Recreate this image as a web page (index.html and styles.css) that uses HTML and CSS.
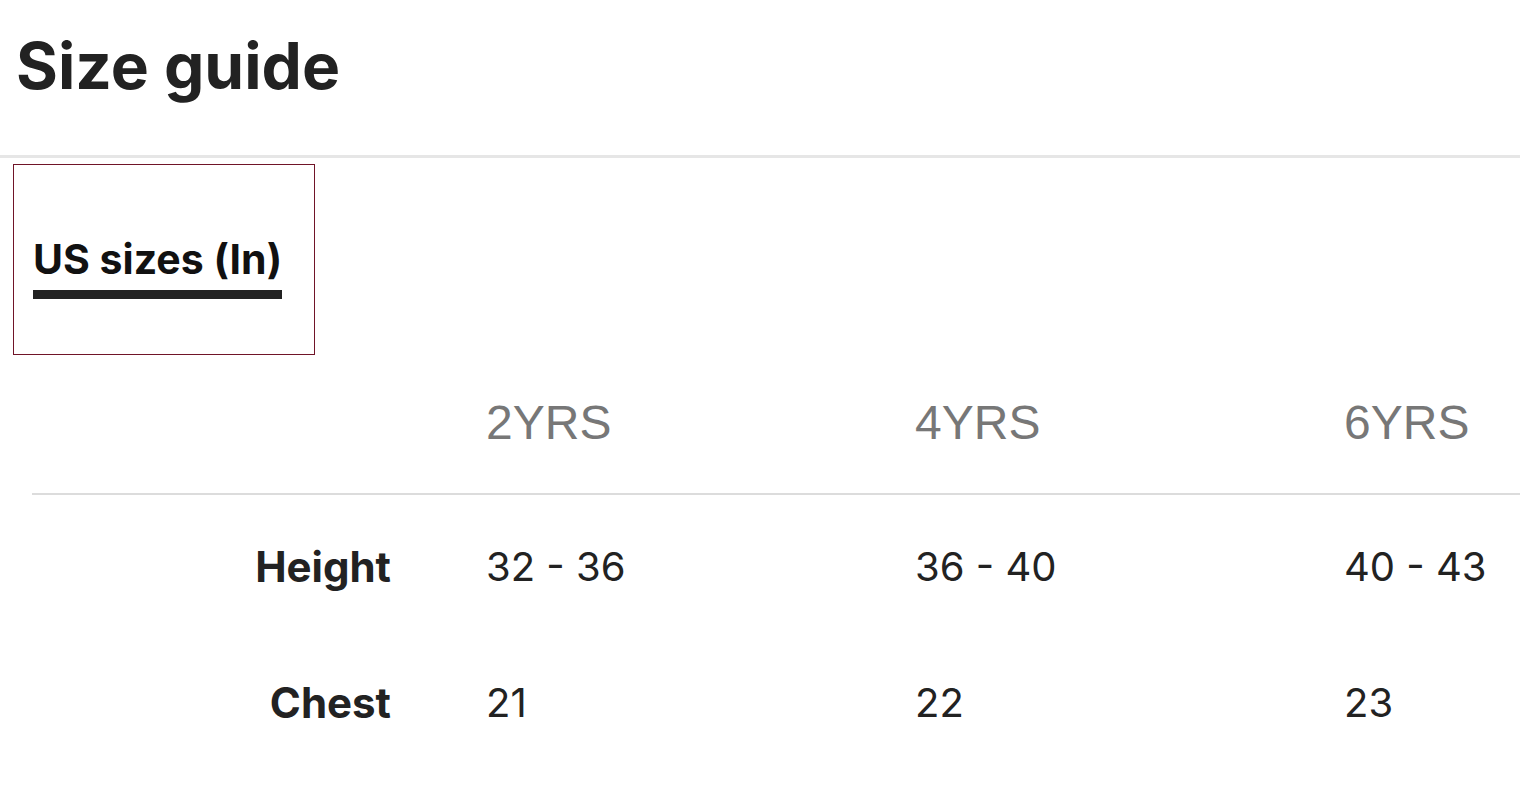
FILE: index.html
```html
<!DOCTYPE html>
<html>
<head>
<meta charset="utf-8">
<link rel="stylesheet" href="styles.css">
</head>
<body>
<div class="page">
  <header class="header">
    <h1 class="title">Size guide</h1>
  </header>
  <div class="tabs">
    <div class="tab"><span class="tab-label">US sizes (In)</span></div>
  </div>
  <div class="table">
    <div class="row head">
      <div class="cell label"></div>
      <div class="cell size">2YRS</div>
      <div class="cell size">4YRS</div>
      <div class="cell size">6YRS</div>
    </div>
    <div class="row body-row">
      <div class="cell label">Height</div>
      <div class="cell val">32 - 36</div>
      <div class="cell val">36 - 40</div>
      <div class="cell val">40 - 43</div>
    </div>
    <div class="row body-row">
      <div class="cell label">Chest</div>
      <div class="cell val">21</div>
      <div class="cell val">22</div>
      <div class="cell val">23</div>
    </div>
  </div>
</div>
</body>
</html>
```
FILE: styles.css
```css
html, body {
  margin: 0;
  padding: 0;
  background: #fff;
}
body {
  width: 1520px;
  height: 800px;
  overflow: hidden;
  font-family: "Inter", "Lato", sans-serif;
  color: #222;
}
.header {
  height: 155px;
  border-bottom: 3px solid #e6e6e6;
  padding: 0 16px;
  display: flex;
  align-items: flex-start;
}
.title {
  margin: 0;
  padding-top: 26px;
  font-size: 64px;
  font-weight: 700;
  line-height: 80px;
  color: #222;
}
.tabs {
  padding: 6px 0 0 13px;
  display: flex;
}
.tab {
  width: 300px;
  height: 189px;
  border: 1px solid #701428;
  display: flex;
  align-items: flex-start;
}
.tab-label {
  margin: 69px 0 0 19px;
  font-size: 41px;
  font-weight: 700;
  line-height: 50px;
  color: #111;
  border-bottom: 9px solid #222;
  padding-bottom: 6px;
}
.table {
  margin-left: 32px;
  width: 1488px;
}
.row {
  display: grid;
  grid-template-columns: 454px 429px 429px 1fr;
}
.row.head {
  height: 138px;
  border-bottom: 2px solid #dcdcdc;
  align-items: start;
}
.size {
  font-family: "Liberation Sans", Arial, sans-serif;
  font-size: 48px;
  color: #777;
  padding-top: 40px;
  line-height: 56px;
}
.body-row {
  height: 136px;
  align-items: start;
}
.body-row .cell {
  font-size: 40px;
  line-height: 56px;
  padding-top: 44px;
}
.body-row .cell.label {
  text-align: right;
  padding-right: 95px;
  font-weight: 700;
  font-size: 42px;
}
.val {
  font-weight: 400;
}
```
